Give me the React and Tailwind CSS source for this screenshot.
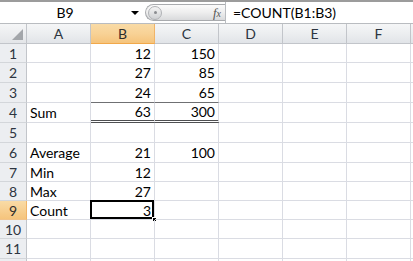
import React from 'react';

const font = { fontFamily: 'Lato, "Liberation Sans", sans-serif' };

const cols = ['A', 'B', 'C', 'D', 'E', 'F', ''];

const rows = [
    { n: 1, h: 'h-[19px]', a: '', b: '12', c: '150' },
    { n: 2, h: 'h-[20px]', a: '', b: '27', c: '85' },
    { n: 3, h: 'h-[20px]', a: '', b: '24', c: '65', top: true },
    { n: 4, h: 'h-[20px]', a: 'Sum', b: '63', c: '300', total: true },
    { n: 5, h: 'h-[20px]', a: '', b: '', c: '' },
    { n: 6, h: 'h-[20px]', a: 'Average', b: '21', c: '100' },
    { n: 7, h: 'h-[19px]', a: 'Min', b: '12', c: '' },
    { n: 8, h: 'h-[19px]', a: 'Max', b: '27', c: '' },
    { n: 9, h: 'h-[19px]', a: 'Count', b: '3', c: '', sel: true },
    { n: 10, h: 'h-[19px]', a: '', b: '', c: '' },
    { n: 11, h: 'h-[20px]', a: '', b: '', c: '' },
    { n: '', h: 'h-[20px]', a: '', b: '', c: '' },
];

const FormulaBar = () => (
    <div className="flex h-[24px] shrink-0 border-t-2 border-b border-t-[#9c9c9c] border-b-[#b9bcc0] bg-white">
        {/* name box */}
        <div className="relative flex w-[145px] items-center">
            <span className="w-[130px] text-center text-[14px] text-black">B9</span>
            <span className="absolute left-[131px] top-[9px] h-0 w-0 border-l-[4px] border-r-[4px] border-t-[4px] border-l-transparent border-r-transparent border-t-black" />
        </div>
        {/* pill with fx */}
        <div className="my-[2px] flex w-[80px] items-center justify-between rounded-l-full border border-r-0 border-[#a9abae] bg-gradient-to-b from-[#fbfbfb] via-[#eeeeee] to-[#d9dadc] pl-[2px] pr-[4px]">
            <span className="flex h-[14px] w-[14px] items-center justify-center rounded-full border border-[#b0b2b5] bg-gradient-to-b from-[#f4f4f4] to-[#cfd1d4]">
                <span className="h-[3px] w-[3px] rounded-full bg-[#8a8c90]" />
            </span>
            <span className="text-[13px] italic text-[#555]" style={{ fontFamily: '"Liberation Serif", serif' }}>
                f<span className="text-[10px]">x</span>
            </span>
        </div>
        <div className="flex flex-1 items-center border-l border-[#b9bcc0] pl-[7px] text-[14px] text-black">
            =COUNT(B1:B3)
        </div>
    </div>
);

const HeaderRow = () => (
    <div className="flex h-[20px] shrink-0">
        <div className="relative w-[27px] shrink-0 border-r border-b border-[#c2c5ca] bg-gradient-to-b from-[#f5f6f7] to-[#e3e5e8]">
            <svg className="absolute bottom-[3px] right-[3px]" width="11" height="11" viewBox="0 0 11 11">
                <polygon points="11,0 11,11 0,11" fill="#a3a6aa" />
            </svg>
        </div>
        {cols.map((c, i) => (
            <div
                key={i}
                className={
                    c === 'B'
                        ? 'flex w-[64px] shrink-0 items-center justify-center border-r border-b border-r-[#f0b468] border-b-[#f1a84a] bg-gradient-to-b from-[#f9dba6] via-[#f8d296] to-[#f5c47c] text-[14px] text-[#2d2d2d]'
                        : 'flex w-[64px] shrink-0 items-center justify-center border-r border-b border-[#c2c5ca] bg-gradient-to-b from-[#f5f6f7] via-[#eceef0] to-[#e1e4e8] text-[14px] text-[#2d3540]'
                }
            >
                {c}
            </div>
        ))}
    </div>
);

const Row = ({ r }) => {
    const grid = 'border-r border-b border-[#dadce3]';
    return (
        <div className={`flex shrink-0 ${r.h}`}>
            <div
                className={
                    r.sel
                        ? 'flex w-[27px] shrink-0 items-center justify-center border-r border-b border-r-[#f0b468] border-b-[#f1c38a] bg-gradient-to-b from-[#f9dba6] to-[#f5c47c] text-[14px] text-[#2d2d2d]'
                        : 'flex w-[27px] shrink-0 items-center justify-center border-r border-b border-r-[#c2c5ca] border-b-[#d3d6da] bg-[#eceef1] text-[14px] text-[#2d3540]'
                }
            >
                {r.n}
            </div>
            <div className={`flex w-[64px] shrink-0 items-center pl-[3px] text-[14px] text-black ${grid}`}>{r.a}</div>
            {[r.b, r.c].map((v, i) => (
                <div
                    key={i}
                    className={
                        r.total
                            ? 'relative flex w-[64px] shrink-0 items-center justify-end border-r border-r-[#dadce3] border-b-[3px] border-double border-b-[#4f5052] pr-[3px] text-[14px] text-black'
                            : r.top
                            ? 'relative flex w-[64px] shrink-0 items-center justify-end border-r border-b border-r-[#dadce3] border-b-[#6f7073] pr-[3px] text-[14px] text-black'
                            : 'relative flex w-[64px] shrink-0 items-center justify-end border-r border-b border-[#dadce3] pr-[3px] text-[14px] text-black'
                    }
                >
                    {v}
                    {r.sel && i === 0 && (
                        <>
                            <span className="pointer-events-none absolute -left-px -top-px right-0 bottom-0 border-2 border-black" />
                            <span className="absolute -bottom-[3px] -right-[3px] h-[5px] w-[5px] border border-white bg-black" />
                        </>
                    )}
                </div>
            ))}
            {['D', 'E', 'F', 'G'].map((c) => (
                <div key={c} className={`w-[64px] shrink-0 ${grid}`} />
            ))}
        </div>
    );
};

const App = () => (
    <div className="flex h-[261px] w-[413px] flex-col overflow-hidden bg-white" style={font}>
        <FormulaBar />
        <HeaderRow />
        {rows.map((r, i) => (
            <Row key={i} r={r} />
        ))}
    </div>
);

export default App;
